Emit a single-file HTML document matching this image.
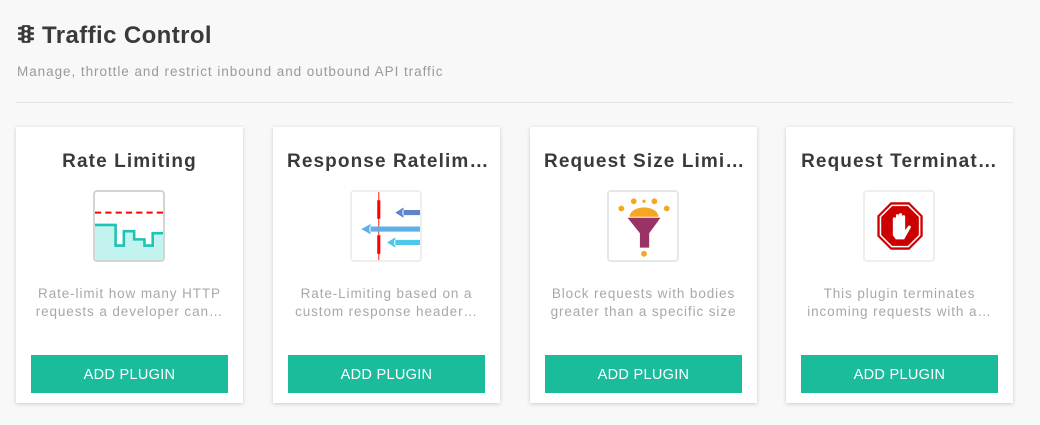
<!DOCTYPE html>
<html><head><meta charset="utf-8"><style>
body{margin:0;background:#f8f8f8;font-family:"Liberation Sans",sans-serif;width:1040px;height:425px;overflow:hidden;position:relative}
h1{position:absolute;left:18px;top:22px;margin:0;font-size:24px;font-weight:bold;color:#3a3a3a;letter-spacing:0.4px}
.sub{position:absolute;left:17px;top:64px;font-size:13.5px;color:#9a9a9a;letter-spacing:0.95px}
.hr{position:absolute;left:16px;top:102px;width:997px;height:1px;background:#e6e6e6}
.card{position:absolute;top:127px;width:227px;height:276px;background:#fff;box-shadow:0 1px 4px rgba(0,0,0,.18)}
.t{position:absolute;top:24px;left:0;right:0;text-align:center;font-size:19px;font-weight:bold;color:#3a3a3a;white-space:nowrap;overflow:hidden;padding:0 14px;letter-spacing:1.1px}
.ic{position:absolute;left:77px;top:63px;width:72px;height:72px;box-sizing:border-box;border:2px solid #e3e6ea;border-radius:4px;overflow:hidden;background:#fff}
.d{position:absolute;top:158px;left:12px;right:12px;text-align:center;font-size:13.5px;line-height:18px;color:#a8a8a8;letter-spacing:0.9px}
.b{position:absolute;left:15px;top:228px;width:197px;height:38px;background:#1abc9c;color:#fff;font-size:14.5px;text-align:center;line-height:40px;letter-spacing:.3px}
</style></head><body>
<h1><svg width="16" height="20" viewBox="0 0 18 20" style="vertical-align:-1px;margin-right:8px"><rect x="4" y="0" width="10" height="20" rx="2" fill="#3a3a3a"/><rect x="0" y="2" width="18" height="3" rx="1" fill="#3a3a3a"/><rect x="0" y="8" width="18" height="3" rx="1" fill="#3a3a3a"/><rect x="0" y="14" width="18" height="3" rx="1" fill="#3a3a3a"/><circle cx="9" cy="4" r="2" fill="#fff"/><circle cx="9" cy="10" r="2" fill="#fff"/><circle cx="9" cy="16" r="2" fill="#fff"/></svg>Traffic Control</h1>
<div class="sub">Manage, throttle and restrict inbound and outbound API traffic</div>
<div class="hr"></div>

<div class="card" style="left:16px"><div class="t">Rate Limiting</div>
<div class="ic" style="border-color:#cfd6d6"><svg width="68" height="68" viewBox="0 0 66 66"><path d="M0 32H20V52H28V38H38V46H48V52H56V40H66V66H0Z" fill="#c2f3ef"/><path d="M0 32H20V52H28V38H38V46H48V52H56V40H66" fill="none" stroke="#1cc4b4" stroke-width="2.5"/><path d="M0 20H66" stroke="#f00" stroke-width="2" stroke-dasharray="6 4"/></svg></div>
<div class="d">Rate-limit how many HTTP requests a developer can…</div><div class="b">ADD PLUGIN</div></div>

<div class="card" style="left:273px"><div class="t">Response Ratelim…</div>
<div class="ic" style="border-color:#eeeeee"><svg width="68" height="68" viewBox="0 0 66 66"><path d="M26 -2V66" stroke="#f22" stroke-width="1"/><rect x="24.5" y="8" width="3" height="18" fill="#f00"/><rect x="24.5" y="42" width="3" height="18" fill="#f00"/><path d="M50 15L42 20L50 25Z M49 17.5H70V22.5H49Z" fill="#5e82cc"/><path d="M18 31L9 36L18 41Z M17 33.5H70V38.5H17Z" fill="#5db0e8"/><path d="M42 44L34 49L42 54Z M41 46.5H70V51.5H41Z" fill="#4cc8ea"/></svg></div>
<div class="d">Rate-Limiting based on a custom response header…</div><div class="b">ADD PLUGIN</div></div>

<div class="card" style="left:530px"><div class="t">Request Size Limi…</div>
<div class="ic" style="left:77px"><svg width="68" height="68" viewBox="0 0 66 66"><g fill="#f5a623"><circle cx="12" cy="16" r="2.8"/><circle cx="24" cy="9" r="2.8"/><circle cx="34" cy="9" r="1.6"/><circle cx="44" cy="9" r="2.8"/><circle cx="56" cy="16" r="2.8"/><path d="M20 24A14 9 0 0 1 48 24Z"/><circle cx="34" cy="60" r="2.8"/></g><path d="M18 25H50L39 40V54H30V40Z" fill="#993366"/></svg></div>
<div class="d">Block requests with bodies greater than a specific size</div><div class="b">ADD PLUGIN</div></div>

<div class="card" style="left:786px"><div class="t">Request Terminat…</div>
<div class="ic" style="border-color:#eeeeee"><svg width="68" height="68" viewBox="0 0 66 66"><polygon points="25,10 43,10 56,23 56,43 43,56 25,56 12,43 12,23" fill="#c00"/><polygon points="26,13 42,13 53,24 53,42 42,53 26,53 15,42 15,24" fill="none" stroke="#fff" stroke-width="1.5"/><path d="M27 42V26a1.5 1.5 0 0 1 3 0V33V23a1.5 1.5 0 0 1 3 0V33V22a1.5 1.5 0 0 1 3 0V33V24a1.5 1.5 0 0 1 3 0V37l3-4a1.5 1.5 0 0 1 2.5 1.5L38 46H30Z" fill="#fff"/></svg></div>
<div class="d">This plugin terminates incoming requests with a…</div><div class="b">ADD PLUGIN</div></div>
</body></html>
